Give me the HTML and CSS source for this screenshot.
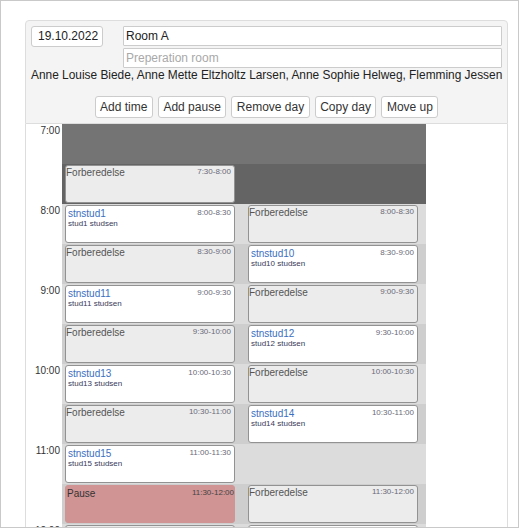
FILE: index.html
```html
<!DOCTYPE html>
<html>
<head>
<meta charset="utf-8">
<link rel="stylesheet" href="styles.css">
</head>
<body>
<div class="frame">
  <div class="panel">
    <div class="row">
      <div class="date">19.10.2022</div>
      <div class="rooms">
        <div class="field">Room A</div>
        <div class="field placeholder">Preperation room</div>
      </div>
    </div>
    <div class="names">Anne Louise Biede, Anne Mette Eltzholtz Larsen, Anne Sophie Helweg, Flemming Jessen</div>
    <div class="actions">
      <button class="btn">Add time</button>
      <button class="btn">Add pause</button>
      <button class="btn">Remove day</button>
      <button class="btn">Copy day</button>
      <button class="btn">Move up</button>
    </div>
  </div>
  <div class="calendar">
    <div class="hours">
      <div class="hour">7:00</div>
      <div class="hour">8:00</div>
      <div class="hour">9:00</div>
      <div class="hour">10:00</div>
      <div class="hour">11:00</div>
      <div class="hour">12:00</div>
    </div>
    <div class="day">
      <div class="col">
        <div class="slot s-x"></div>
        <div class="slot s-y"><div class="ev prep"><span class="ttl">Forberedelse</span><span class="tm">7:30-8:00</span></div></div>
        <div class="slot s-a"><div class="ev stud"><div class="who"><div class="nm">stnstud1</div><div class="sub">stud1 studsen</div></div><span class="tm">8:00-8:30</span></div></div>
        <div class="slot s-b"><div class="ev prep"><span class="ttl">Forberedelse</span><span class="tm">8:30-9:00</span></div></div>
        <div class="slot s-a"><div class="ev stud"><div class="who"><div class="nm">stnstud11</div><div class="sub">stud11 studsen</div></div><span class="tm">9:00-9:30</span></div></div>
        <div class="slot s-b"><div class="ev prep"><span class="ttl">Forberedelse</span><span class="tm">9:30-10:00</span></div></div>
        <div class="slot s-a"><div class="ev stud"><div class="who"><div class="nm">stnstud13</div><div class="sub">stud13 studsen</div></div><span class="tm">10:00-10:30</span></div></div>
        <div class="slot s-b"><div class="ev prep"><span class="ttl">Forberedelse</span><span class="tm">10:30-11:00</span></div></div>
        <div class="slot s-a"><div class="ev stud"><div class="who"><div class="nm">stnstud15</div><div class="sub">stud15 studsen</div></div><span class="tm">11:00-11:30</span></div></div>
        <div class="slot s-b"><div class="ev pause"><span class="ttl">Pause</span><span class="tm">11:30-12:00</span></div></div>
        <div class="slot s-a"><div class="ev prep"></div></div>
      </div>
      <div class="col col2">
        <div class="slot s-x"></div>
        <div class="slot s-y"></div>
        <div class="slot s-a"><div class="ev prep"><span class="ttl">Forberedelse</span><span class="tm">8:00-8:30</span></div></div>
        <div class="slot s-b"><div class="ev stud"><div class="who"><div class="nm">stnstud10</div><div class="sub">stud10 studsen</div></div><span class="tm">8:30-9:00</span></div></div>
        <div class="slot s-a"><div class="ev prep"><span class="ttl">Forberedelse</span><span class="tm">9:00-9:30</span></div></div>
        <div class="slot s-b"><div class="ev stud"><div class="who"><div class="nm">stnstud12</div><div class="sub">stud12 studsen</div></div><span class="tm">9:30-10:00</span></div></div>
        <div class="slot s-a"><div class="ev prep"><span class="ttl">Forberedelse</span><span class="tm">10:00-10:30</span></div></div>
        <div class="slot s-b"><div class="ev stud"><div class="who"><div class="nm">stnstud14</div><div class="sub">stud14 studsen</div></div><span class="tm">10:30-11:00</span></div></div>
        <div class="slot s-a"></div>
        <div class="slot s-b"><div class="ev prep"><span class="ttl">Forberedelse</span><span class="tm">11:30-12:00</span></div></div>
        <div class="slot s-a"><div class="ev stud"></div></div>
      </div>
    </div>
    <div class="rest"></div>
  </div>
</div>
</body>
</html>
```

FILE: styles.css
```css
* { box-sizing: border-box; }
body { margin: 0; font-family: "Liberation Sans", Arial, sans-serif; background: #fff; }
.frame {
  width: 519px; height: 528px;
  border: 1px solid #c9c9c9;
  overflow: hidden;
  padding: 19px 10px 0 24px;
  background: #fff;
}
.panel {
  background: #f4f4f4;
  border: 1px solid #ddd;
  border-radius: 4px 4px 0 0;
  padding: 5px;
}
.row { display: flex; align-items: flex-start; }
.date {
  width: 72px; height: 21px;
  border: 1px solid #ccc; border-radius: 3px;
  background: #fff;
  font-size: 12px; line-height: 19px;
  color: #222;
  padding: 0 6px;
  margin-right: 20px;
}
.rooms { flex: 1; display: flex; flex-direction: column; gap: 2px; }
.field {
  height: 20px;
  border: 1px solid #ccc; border-radius: 1px;
  background: #fff;
  font-size: 12px; line-height: 18px;
  padding: 0 2px;
  color: #222;
}
.field.placeholder { color: #a9a9a9; }
.names { font-size: 11.9px; line-height: 14px; color: #222; white-space: nowrap; }
.actions { display: flex; justify-content: center; gap: 5px; margin-top: 14px; }
.btn {
  height: 22px;
  padding: 0 4.5px;
  border: 1px solid #ccc; border-radius: 3px;
  background: #fff;
  font: 12px "Liberation Sans", Arial, sans-serif;
  color: #333;
}
.calendar { display: flex; border-left: 1px solid #ddd; border-right: 1px solid #ddd; }
.hours { width: 36px; flex: none; }
.hour { height: 80px; text-align: right; padding: 1px 2px 0 0; font-size: 10px; color: #333; }
.day { display: flex; flex: none; }
.rest { flex: 1; }
.col { width: 182px; }
.slot { height: 40px; padding: 1px 9px 0 3px; }
.col2 .slot { padding-left: 4px; padding-right: 8px; }
.s-a { background: #dcdcdc; }
.s-b { background: #cecece; }
.s-x { background: #747474; }
.s-y { background: #646464; }
.ev {
  height: 38px;
  border: 1px solid #929292; border-radius: 3px;
  display: flex; justify-content: space-between; align-items: flex-start;
}
.ev.prep { background: #ececec; padding: 1px 3px 0 0; }
.ev.stud { background: #fff; padding: 2px 3px 0 2px; }
.ev.pause { background: #d09494; border-color: #d09494; padding: 2px 0 0 1px; }
.ttl { font-size: 10px; line-height: 11.5px; color: #555; }
.pause .ttl { color: #333; }
.nm { font-size: 10px; line-height: 11px; color: #3b6fc0; }
.sub { font-size: 8px; line-height: 9px; color: #3a3a5a; }
.tm { font-size: 8px; line-height: 9px; color: #6a6a78; }
.pause .tm { color: #444; }
```
